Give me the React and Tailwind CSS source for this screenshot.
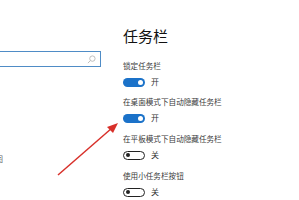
import React from "react";

const Toggle = ({ on }) => (
  <div className="flex items-center h-[10px] mt-[5px]">
    {on ? (
      <div className="w-[22px] h-[9px] rounded-full bg-[#1b72c9] flex items-center justify-end pr-[2px]">
        <div className="w-[5px] h-[5px] rounded-full bg-white"></div>
      </div>
    ) : (
      <div className="w-[22px] h-[9px] rounded-full border border-[#222] flex items-center pl-[2px]">
        <div className="w-[4px] h-[4px] rounded-full bg-[#222]"></div>
      </div>
    )}
    <span className="ml-[6px] text-[8px] leading-none text-[#333]">{on ? "开" : "关"}</span>
  </div>
);

const Setting = ({ label, on, gap }) => (
  <div className={gap}>
    <div className="text-[7.6px] leading-[12px] text-[#3a3a3a]">{label}</div>
    <Toggle on={on} />
  </div>
);

export default function App() {
  return (
    <div
      className="relative w-[299px] h-[200px] overflow-hidden bg-white flex"
      style={{ fontFamily: '"Noto Sans CJK SC", "Noto Sans", sans-serif' }}
    >
      {/* Left pane */}
      <div className="w-[101px] pt-[51px] shrink-0">
        <div className="h-[16px] border border-[#4f8cc6] border-l-0 flex items-center justify-end pr-[4px]">
          <svg width="9" height="9" viewBox="0 0 10 10" fill="none" stroke="#b8b8b8" strokeWidth="1">
            <circle cx="6" cy="4" r="3" />
            <line x1="3.8" y1="6.2" x2="1" y2="9" />
          </svg>
        </div>
        <div className="mt-[86px] -ml-[5px] text-[8px] leading-[12px] text-[#666]">图</div>
      </div>

      {/* Right pane */}
      <div className="pl-[22px] pt-[27px]">
        <div className="text-[15px] leading-[18px] text-[#111]">任务栏</div>
        <Setting label="锁定任务栏" on gap="mt-[15px]" />
        <Setting label="在桌面模式下自动隐藏任务栏" on gap="mt-[9px]" />
        <Setting label="在平板模式下自动隐藏任务栏" gap="mt-[10px]" />
        <Setting label="使用小任务栏按钮" gap="mt-[10px]" />
      </div>

      {/* Annotation arrow */}
      <svg className="absolute left-0 top-0 pointer-events-none" width="299" height="200">
        <line x1="58" y1="175" x2="112" y2="128" stroke="#d8302a" strokeWidth="1.5" />
        <polygon points="118,123 107,127 113,133" fill="#d8302a" />
      </svg>
    </div>
  );
}
